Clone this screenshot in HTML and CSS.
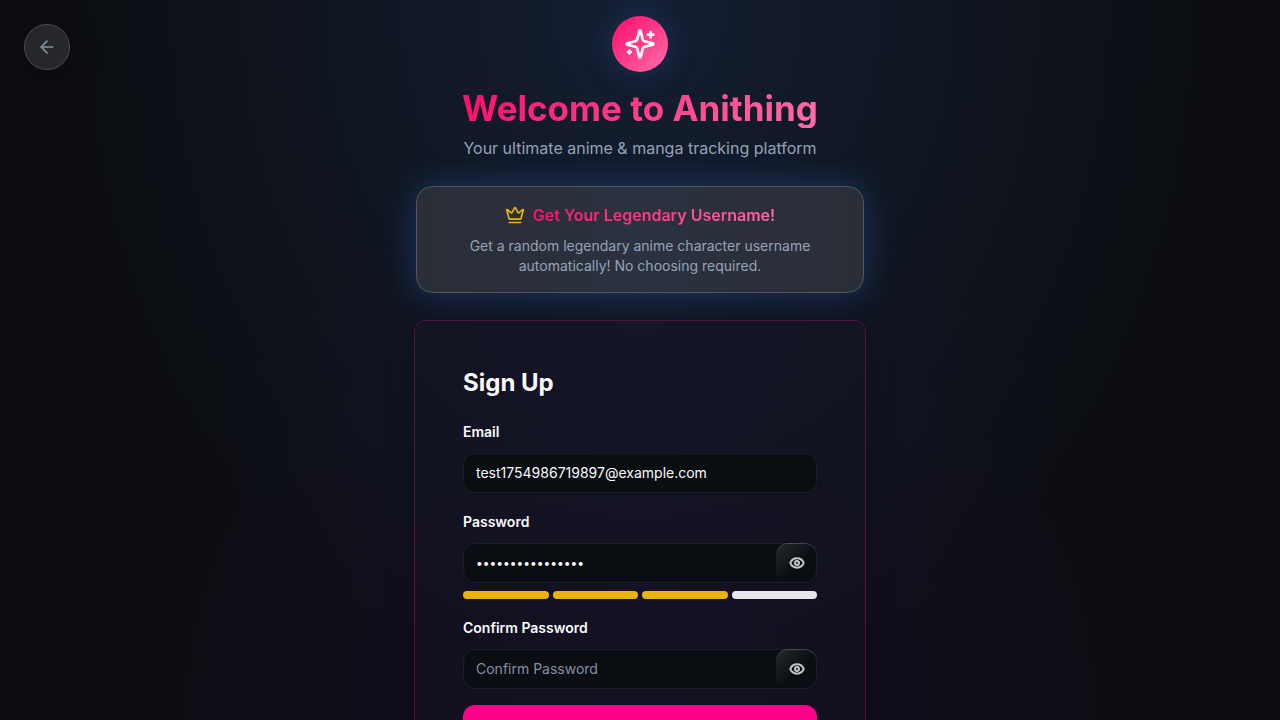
FILE: index.html
```html
<!DOCTYPE html>
<html lang="en">
<head>
<meta charset="utf-8">
<meta name="viewport" content="width=device-width, initial-scale=1">
<title>Anithing</title>
<link rel="stylesheet" href="styles.css">
</head>
<body>
<div class="page">
  <button class="back" type="button" aria-label="Back">
    <svg class="icon-md" viewBox="0 0 24 24"><path d="m12 19-7-7 7-7"/><path d="M19 12H5"/></svg>
  </button>
  <main class="content">
    <header class="hero">
      <div class="logo">
        <svg class="icon-lg" viewBox="0 0 24 24"><path d="M9.937 15.5A2 2 0 0 0 8.5 14.063l-6.135-1.582a.5.5 0 0 1 0-.962L8.5 9.936A2 2 0 0 0 9.937 8.5l1.582-6.135a.5.5 0 0 1 .963 0L14.063 8.5A2 2 0 0 0 15.5 9.937l6.135 1.581a.5.5 0 0 1 0 .964L15.5 14.063a2 2 0 0 0-1.437 1.437l-1.582 6.135a.5.5 0 0 1-.963 0z"/><path d="M20 3v4"/><path d="M22 5h-4"/><path d="M4 17v2"/><path d="M5 18H3"/></svg>
      </div>
      <h1 class="title gradient-text">Welcome to Anithing</h1>
      <p class="subtitle">Your ultimate anime &amp; manga tracking platform</p>
    </header>
    <section class="banner">
      <div class="banner-head">
        <svg class="icon-md crown" viewBox="0 0 24 24"><path d="M11.562 3.266a.5.5 0 0 1 .876 0L15.39 8.87a1 1 0 0 0 1.516.294L21.183 5.5a.5.5 0 0 1 .798.519l-2.834 10.246a1 1 0 0 1-.956.734H5.81a1 1 0 0 1-.957-.734L2.02 6.02a.5.5 0 0 1 .798-.519l4.276 3.664a1 1 0 0 0 1.516-.294z"/><path d="M5 21h14"/></svg>
        <h2 class="banner-title gradient-text">Get Your Legendary Username!</h2>
      </div>
      <p class="banner-text">Get a random legendary anime character username automatically! No choosing required.</p>
    </section>
    <form class="card">
      <h2 class="card-title">Sign Up</h2>
      <div class="field">
        <label class="label" for="email">Email</label>
        <input class="input" id="email" type="email" value="test1754986719897@example.com">
      </div>
      <div class="field">
        <label class="label" for="password">Password</label>
        <div class="secret">
          <input class="input input-masked" id="password" type="password" value="abcdefghijklmnop" autocomplete="new-password">
          <button class="reveal" type="button" aria-label="Show password">
            <svg class="icon-sm" viewBox="0 0 24 24"><path d="M2.06 12.35a1 1 0 0 1 0-.7 10.75 10.75 0 0 1 19.88 0 1 1 0 0 1 0 .7 10.75 10.75 0 0 1-19.88 0"/><circle cx="12" cy="12" r="3"/></svg>
          </button>
        </div>
        <div class="strength">
          <span class="bar bar-on"></span><span class="bar bar-on"></span><span class="bar bar-on"></span><span class="bar"></span>
        </div>
      </div>
      <div class="field">
        <label class="label" for="confirm">Confirm Password</label>
        <div class="secret">
          <input class="input" id="confirm" type="password" placeholder="Confirm Password" autocomplete="new-password">
          <button class="reveal" type="button" aria-label="Show password">
            <svg class="icon-sm" viewBox="0 0 24 24"><path d="M2.06 12.35a1 1 0 0 1 0-.7 10.75 10.75 0 0 1 19.88 0 1 1 0 0 1 0 .7 10.75 10.75 0 0 1-19.88 0"/><circle cx="12" cy="12" r="3"/></svg>
          </button>
        </div>
      </div>
      <button class="submit" type="submit" aria-label="Sign Up"></button>
    </form>
  </main>
</div>
</body>
</html>
```
FILE: styles.css
```css
* { box-sizing: border-box; }
body, h1, h2, p { margin: 0; }
body {
  font-family: Inter, "Liberation Sans", sans-serif;
  color: #fafafa;
  background: #0c0e12;
}
button, input { font: inherit; color: inherit; }
svg {
  display: block;
  fill: none;
  stroke: currentColor;
  stroke-width: 2;
  stroke-linecap: round;
  stroke-linejoin: round;
}
.icon-sm { width: 16px; height: 16px; stroke-width: 3; }
.icon-md { width: 20px; height: 20px; }
.icon-lg { width: 32px; height: 32px; }

.page {
  position: relative;
  height: 100vh;
  overflow-y: auto;
  scrollbar-width: none;
  padding: 16px;
  background:
    radial-gradient(ellipse 44% 100% at 50% 0%, rgba(34, 58, 104, 0.38), transparent 100%),
    radial-gradient(ellipse 42% 75% at 50% 100%, rgba(36, 14, 64, 0.36), transparent 100%),
    #0c0e12;
}
.back {
  position: absolute;
  top: 24px;
  left: 24px;
  width: 46px;
  height: 46px;
  display: grid;
  place-items: center;
  padding: 0;
  border: 1px solid #4b4d51;
  border-radius: 50%;
  background: #25272b;
  color: #8391a5;
  box-shadow: 0 8px 32px rgba(0, 0, 0, 0.3);
}
.content {
  display: flex;
  flex-direction: column;
  align-items: center;
}
.hero { text-align: center; }
.logo {
  display: grid;
  place-items: center;
  width: 56px;
  height: 56px;
  margin: 0 auto 16px;
  border-radius: 50%;
  background: linear-gradient(135deg, #ff0a6c, #ff6fa8);
  box-shadow: 0 0 32px rgba(59, 130, 246, 0.22);
}
.gradient-text {
  background: linear-gradient(135deg, #ff0a6c, #ff6fa8);
  -webkit-background-clip: text;
  background-clip: text;
  color: transparent;
}
.title { font-size: 35px; line-height: 40px; font-weight: 700; }
.subtitle { margin-top: 8px; font-size: 16px; line-height: 24px; color: #94a3b8; }
.banner {
  width: 100%;
  max-width: 448px;
  margin-top: 26px;
  padding: 16px;
  border: 1px solid #52565f;
  border-radius: 16px;
  background: linear-gradient(90deg, #292e37, #2c3140 50%, #292e37);
  box-shadow: 0 0 32px rgba(59, 130, 246, 0.3);
  text-align: center;
}
.banner-head { display: flex; align-items: center; justify-content: center; gap: 8px; }
.crown { color: #eab308; }
.banner-title { font-size: 16px; line-height: 24px; font-weight: 600; }
.banner-text { margin: 9px auto 0; max-width: 360px; font-size: 14px; line-height: 20px; color: #94a3b8; }
.card {
  width: 100%;
  max-width: 452px;
  margin-top: 27px;
  padding: 46px 48px 48px;
  border: 1px solid #55103e;
  border-radius: 12px;
  background: rgba(20, 20, 34, 0.35);
  box-shadow: 0 8px 32px rgba(0, 0, 0, 0.2);
}
.card-title { margin-bottom: 23px; font-size: 24px; line-height: 32px; font-weight: 700; }
.field { margin-bottom: 19px; }
.field:last-of-type { margin-bottom: 16px; }
.label { display: block; margin-bottom: 11px; font-size: 14px; line-height: 20px; font-weight: 600; }
.input {
  display: block;
  width: 100%;
  height: 40px;
  padding: 0 12px 1px;
  border: 1px solid #1d1f27;
  border-radius: 12px;
  outline: none;
  background: #0a0d11;
  font-size: 14px;
}
.input-masked { font-size: 12px; }
.input::placeholder { color: #8490a5; opacity: 1; }
.secret { position: relative; }
.reveal {
  position: absolute;
  top: 0;
  right: 0;
  width: 41px;
  height: 40px;
  display: grid;
  place-items: center;
  padding: 0;
  border: 0;
  border-radius: 12px;
  background: linear-gradient(135deg, rgba(255, 255, 255, 0.12), transparent 55%);
  box-shadow: inset 0 1px 0 rgba(255, 255, 255, 0.12);
  color: #c3c5c9;
}
.strength { display: grid; grid-template-columns: repeat(4, 1fr); gap: 4px; margin-top: 8px; }
.bar { height: 8px; border-radius: 4px; background: #e5e7eb; }
.bar-on { background: #eab308; }
.submit {
  display: block;
  width: 100%;
  height: 44px;
  border: 0;
  border-radius: 12px;
  background: #ff0088;
}
```
